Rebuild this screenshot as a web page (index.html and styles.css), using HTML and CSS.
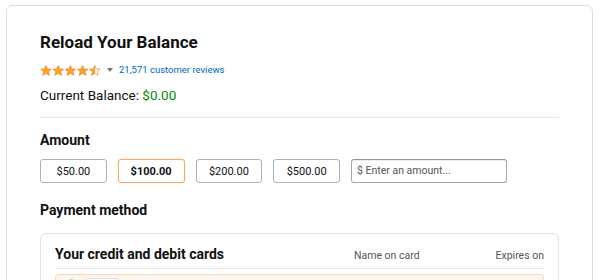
FILE: index.html
```html
<!DOCTYPE html>
<html>
<head>
<meta charset="utf-8">
<link rel="stylesheet" href="styles.css">
</head>
<body>
<div class="page">
  <div class="card">
    <h1 class="title">Reload Your Balance</h1>
    <div class="rating">
      <svg class="stars" width="62" height="11" viewBox="0 0 62 11">
        <defs>
          <linearGradient id="half">
            <stop offset="50%" stop-color="#ffa41c"/>
            <stop offset="50%" stop-color="#ffffff"/>
          </linearGradient>
          <path id="st" d="M6 0.5 L7.5 4 L11.4 4.2 L8.4 6.6 L9.4 10.4 L6 8.3 L2.6 10.4 L3.6 6.6 L0.6 4.2 L4.5 4 Z"/>
        </defs>
        <use href="#st" x="0" fill="#ffa41c" stroke="#de7921" stroke-width="0.6"/>
        <use href="#st" x="12.2" fill="#ffa41c" stroke="#de7921" stroke-width="0.6"/>
        <use href="#st" x="24.4" fill="#ffa41c" stroke="#de7921" stroke-width="0.6"/>
        <use href="#st" x="36.6" fill="#ffa41c" stroke="#de7921" stroke-width="0.6"/>
        <use href="#st" x="48.8" fill="url(#half)" stroke="#de7921" stroke-width="0.6"/>
      </svg>
      <span class="caret"></span>
      <a class="reviews" href="#">21,571 customer reviews</a>
    </div>
    <div class="balance">Current Balance: <span class="amount-green">$0.00</span></div>
    <hr class="divider">
    <h2 class="section">Amount</h2>
    <div class="amounts">
      <button class="amt">$50.00</button>
      <button class="amt selected">$100.00</button>
      <button class="amt">$200.00</button>
      <button class="amt">$500.00</button>
      <div class="custom">$ Enter an amount...</div>
    </div>
    <h2 class="section pay">Payment method</h2>
    <div class="inner">
      <div class="inner-head">
        <div class="head-title">Your credit and debit cards</div>
        <div class="head-name">Name on card</div>
        <div class="head-exp">Expires on</div>
      </div>
      <div class="row-selected">
        <span class="radio"></span>
        <span class="cardimg"></span>
      </div>
    </div>
  </div>
</div>
</body>
</html>
```
FILE: styles.css
```css
* { box-sizing: border-box; }
body {
  margin: 0;
  font-family: Roboto, "Open Sans", "Liberation Sans", sans-serif;
  color: #111;
  background: #fff;
}
.page {
  padding: 5px 7px 0 6px;
}
.card {
  border: 1px solid #dedede;
  border-radius: 6px;
  padding: 26px 33px 0 33px;
  height: 320px;
}
.title {
  margin: 0;
  font-size: 17px;
  font-weight: 700;
  line-height: 20px;
}
.rating {
  display: flex;
  align-items: center;
  margin-top: 11px;
  height: 14px;
}
.stars { display: block; }
.caret {
  width: 0; height: 0;
  border-left: 3px solid transparent;
  border-right: 3px solid transparent;
  border-top: 4px solid #777;
  margin: 0 6px 0 5px;
}
.reviews {
  font-size: 9.5px;
  color: #0066c0;
  text-decoration: none;
  line-height: 14px;
}
.balance {
  margin-top: 9px;
  font-size: 13.5px;
  line-height: 18px;
}
.amount-green { color: #008a00; }
.divider {
  border: 0;
  border-top: 1px solid #e7e7e7;
  margin: 13px 0 0 0;
}
.section {
  margin: 13px 0 0 0;
  font-size: 14px;
  font-weight: 700;
  line-height: 18px;
}
.amounts {
  display: flex;
  gap: 11px;
  margin-top: 10px;
}
.amt {
  width: 66.75px;
  height: 24px;
  font-family: inherit;
  font-size: 11px;
  color: #111;
  background: #fff;
  border: 1px solid #adb1b8;
  border-radius: 3px;
  padding: 0;
}
.amt.selected {
  border-color: #f0ad6e;
  font-weight: 700;
  box-shadow: 0 0 2px rgba(228,121,17,.3);
}
.custom {
  width: 156px;
  height: 24px;
  border: 1px solid #a6a6a6;
  border-top-color: #949494;
  border-radius: 3px;
  font-size: 10.5px;
  color: #555;
  line-height: 22px;
  padding-left: 5px;
  box-shadow: 0 1px 0 rgba(0,0,0,.07) inset;
}
.pay { margin-top: 18px; }
.inner {
  margin-top: 14px;
  width: 519px;
  border: 1px solid #e3e3e3;
  border-radius: 6px;
  padding: 11px 14px 0 14px;
}
.inner-head {
  display: flex;
  align-items: baseline;
  line-height: 18px;
  padding-bottom: 3px;
  border-bottom: 1px solid #e7e7e7;
}
.head-title {
  font-size: 14px;
  font-weight: 700;
  width: 299px;
}
.head-name, .head-exp {
  font-size: 10.5px;
  color: #555;
}
.head-exp { margin-left: auto; }
.row-selected {
  margin-top: 5px;
  height: 40px;
  background: #fcf5ee;
  border: 1px solid #fbd8b4;
  border-radius: 4px;
  display: flex;
  align-items: flex-start;
  padding: 3px 0 0 10px;
}
.radio {
  width: 10px; height: 10px;
  border-radius: 50%;
  border: 1px solid #c9c9c9;
  background: #eee;
  margin-top: 1px;
}
.cardimg {
  width: 31px; height: 20px;
  border: 1px solid #ddd;
  background: #fff;
  border-radius: 2px;
  margin-left: 11px;
}
```
